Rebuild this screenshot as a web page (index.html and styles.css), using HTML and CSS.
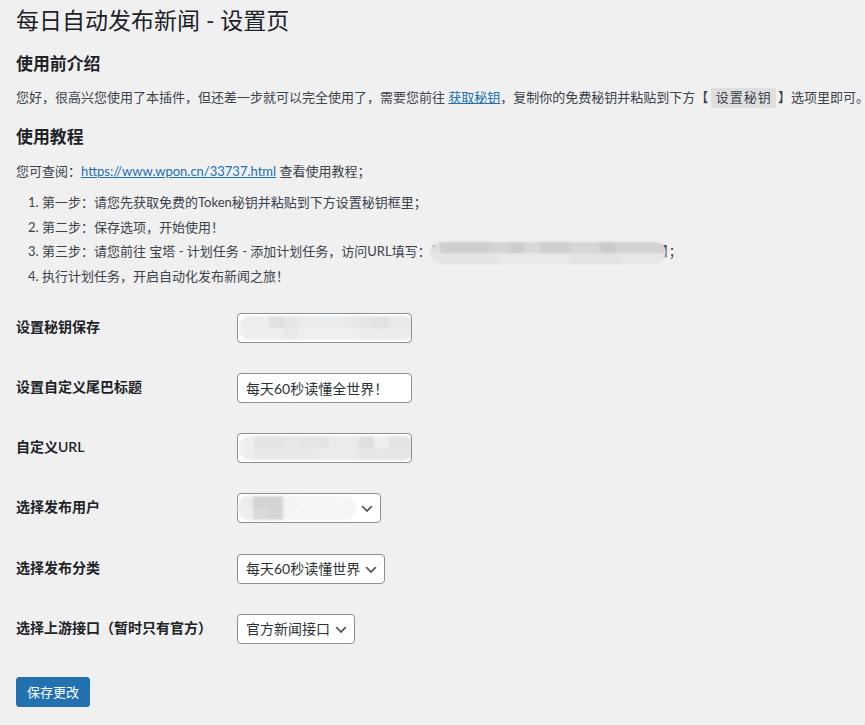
FILE: index.html
```html
<!DOCTYPE html>
<html lang="zh-CN">
<head>
<meta charset="utf-8">
<title>每日自动发布新闻 - 设置页</title>
<link rel="stylesheet" href="styles.css">
</head>
<body>
<div class="wrap">
  <h1>每日自动发布新闻 - 设置页</h1>

  <h2 class="first">使用前介绍</h2>
  <p class="intro">您好，很高兴您使用了本插件，但还差一步就可以完全使用了，需要您前往 <a href="#">获取秘钥</a>，复制你的免费秘钥并粘贴到下方【 <code>设置秘钥</code> 】选项里即可。</p>

  <h2>使用教程</h2>
  <p class="see">您可查阅：<a href="#">https://www.wpon.cn/33737.html</a> 查看使用教程；</p>
  <ol class="steps">
    <li>第一步：请您先获取免费的Token秘钥并粘贴到下方设置秘钥框里；</li>
    <li>第二步：保存选项，开始使用！</li>
    <li>第三步：请您前往 宝塔 - 计划任务 - 添加计划任务，访问URL填写：【<span class="blur blur-url"></span>】；</li>
    <li>执行计划任务，开启自动化发布新闻之旅！</li>
  </ol>

  <form>
    <table class="form-table">
      <tr>
        <th>设置秘钥保存</th>
        <td><div class="field"><span class="blur blur-key"></span></div></td>
      </tr>
      <tr>
        <th>设置自定义尾巴标题</th>
        <td><input class="field text" type="text" value="每天60秒读懂全世界！"></td>
      </tr>
      <tr>
        <th>自定义URL</th>
        <td><div class="field"><span class="blur blur-url2"></span></div></td>
      </tr>
      <tr>
        <th>选择发布用户</th>
        <td>
          <div class="select select-user"><span class="blur blur-user"></span>
            <svg class="chev" viewBox="0 0 20 20" width="16" height="16"><path d="M5 6l5 5 5-5 2 1-7 7-7-7 2-1z" fill="#555"/></svg>
          </div>
        </td>
      </tr>
      <tr>
        <th>选择发布分类</th>
        <td>
          <div class="select"><span>每天60秒读懂世界</span>
            <svg class="chev" viewBox="0 0 20 20" width="16" height="16"><path d="M5 6l5 5 5-5 2 1-7 7-7-7 2-1z" fill="#555"/></svg>
          </div>
        </td>
      </tr>
      <tr>
        <th>选择上游接口（暂时只有官方）</th>
        <td>
          <div class="select"><span>官方新闻接口</span>
            <svg class="chev" viewBox="0 0 20 20" width="16" height="16"><path d="M5 6l5 5 5-5 2 1-7 7-7-7 2-1z" fill="#555"/></svg>
          </div>
        </td>
      </tr>
    </table>
    <p class="submit"><button type="button" class="button-primary">保存更改</button></p>
  </form>
</div>
</body>
</html>
```

FILE: styles.css
```css
html, body {
  margin: 0;
  padding: 0;
  background: #f0f0f1;
}

body {
  font-family: "Lato", "Noto Sans CJK SC", sans-serif;
  font-size: 13px;
  line-height: 1.5;
  color: #3c434a;
}

.wrap {
  padding: 5px 0 0 16px;
}

h1 {
  margin: 0;
  font-size: 23px;
  font-weight: 400;
  line-height: 30px;
  color: #1d2327;
}

h2 {
  margin: 17px 0 0;
  font-size: 16.9px;
  font-weight: 600;
  line-height: 22px;
  color: #1d2327;
}

h2.first {
  margin-top: 18px;
}

p {
  margin: 0;
  line-height: 19.5px;
}

.intro {
  margin-top: 13px;
  white-space: nowrap;
}

.see {
  margin-top: 14px;
}

a {
  color: #2271b1;
  text-decoration: underline;
}

code {
  font-family: "Liberation Mono", "Noto Sans CJK SC", monospace;
  font-size: 13px;
  letter-spacing: 1px;
  padding: 3px 4px 2px 5px;
  margin: 0 -1px;
  background: rgba(0, 0, 0, 0.07);
  color: #3c434a;
}

.steps {
  margin: 12px 0 0;
  padding-left: 26px;
}

.steps li {
  line-height: 19.5px;
  margin-bottom: 5px;
}

.blur {
  display: inline-block;
  filter: blur(1.2px);
  border-radius: 11px;
}

.blur-url {
  width: 236px;
  height: 22px;
  margin: -3px -4px -3px -7px;
  vertical-align: middle;
  background:
    linear-gradient(to right,
      #e0e0e0 0 10px, #cfcfcf 10px 60px, #d4d4d4 60px 80px, #cdcdcd 80px 95px,
      #d8d8d8 95px 110px, #cecece 110px 140px, #d6d6d6 140px 170px,
      #cacaca 170px 185px, #d3d3d3 185px 236px) top / 100% 50% no-repeat,
    linear-gradient(to right,
      #e4e4e4 0 70px, #e8e8e8 70px 140px, #e3e3e3 140px 190px, #e6e6e6 190px 236px) bottom / 100% 50% no-repeat;
}

.form-table {
  border-collapse: collapse;
  margin-top: 12px;
  width: 100%;
}

.form-table th {
  width: 200px;
  padding: 20px 10px 20px 0;
  text-align: left;
  vertical-align: top;
  font-size: 14px;
  font-weight: 600;
  line-height: 18px;
  color: #1d2327;
}

.form-table td {
  padding: 15px 10px 15px 11px;
  vertical-align: top;
  font-size: 14px;
  line-height: 1.3;
}

.field {
  box-sizing: border-box;
  display: flex;
  align-items: center;
  width: 175px;
  height: 30px;
  margin: 0;
  padding: 0 8px;
  border: 1px solid #8c8f94;
  border-radius: 4px;
  background: #fff;
  overflow: hidden;
}

.field .blur {
  margin-left: -7px;
  height: 24px;
  flex: none;
}

.text {
  font-family: "Lato", "Noto Sans CJK SC", sans-serif;
  font-size: 14px;
  color: #2c3338;
  outline: none;
}

.blur-key {
  width: 176px;
  background:
    linear-gradient(to right,
      #ededed 0 30px, #e0e0e0 30px 45px, #e6e6e6 45px 60px, #ebebeb 60px 75px,
      #e9ecee 75px 105px, #e8e8e8 105px 120px, #e4e6e8 120px 135px,
      #e2e2e2 135px 150px, #e8eaec 150px 176px) top / 100% 50% no-repeat,
    linear-gradient(to right,
      #eeeeee 0 45px, #e9e9e9 45px 60px, #eeeff1 60px 120px, #ececec 120px 176px) bottom / 100% 50% no-repeat;
}

.blur-url2 {
  width: 176px;
  background:
    linear-gradient(to right,
      #eeeeee 0 15px, #e4e4e4 15px 45px, #e7e7e7 45px 60px, #e5e5e5 60px 90px,
      #ebebeb 90px 120px, #dfdfe1 120px 135px, #eeeeee 135px 150px,
      #e4e4e4 150px 176px) top / 100% 50% no-repeat,
    linear-gradient(to right,
      #eeeeee 0 15px, #e8e8e8 15px 75px, #ececec 75px 120px, #e6e6e6 120px 176px) bottom / 100% 50% no-repeat;
}

.select {
  position: relative;
  box-sizing: border-box;
  display: inline-flex;
  align-items: center;
  height: 30px;
  padding: 0 24px 0 8px;
  border: 1px solid #8c8f94;
  border-radius: 4px;
  background: #fff;
  color: #2c3338;
  font-size: 14px;
  white-space: nowrap;
}

.select-user {
  width: 144px;
  padding-left: 0;
}

.blur-user {
  width: 125px;
  height: 24px;
  background:
    linear-gradient(to right,
      #ececec 0 15px, #d4d4d4 15px 45px, #f3f3f3 45px 60px, #f6f6f6 60px 125px) top / 100% 50% no-repeat,
    linear-gradient(to right,
      #eeeeee 0 15px, #dadada 15px 30px, #d6d6d6 30px 45px, #f4f4f4 45px 125px) bottom / 100% 50% no-repeat;
}

.chev {
  position: absolute;
  right: 5px;
  top: 7px;
}

.submit {
  margin: 18px 0 0;
  padding: 0;
}

.button-primary {
  box-sizing: border-box;
  height: 30px;
  padding: 0 10px;
  border: 1px solid #2271b1;
  border-radius: 3px;
  background: #2271b1;
  color: #fff;
  font-family: "Lato", "Noto Sans CJK SC", sans-serif;
  font-size: 13px;
  line-height: 28px;
  cursor: pointer;
}
```
